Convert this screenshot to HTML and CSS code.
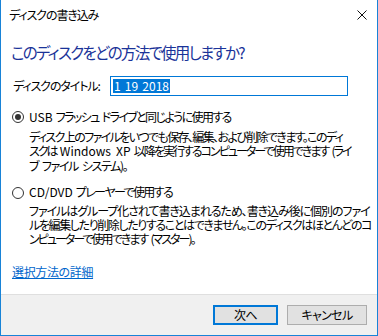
FILE: index.html
```html
<!DOCTYPE html>
<html lang="ja">
<head>
<meta charset="utf-8">
<title>ディスクの書き込み</title>
<link rel="stylesheet" href="styles.css">
</head>
<body>
<div class="window">
  <div class="titlebar">
    <span class="title">ディスクの書き込み</span>
    <svg class="close" width="10" height="10" viewBox="0 0 10 10"><path d="M0.5 0.5 L9.5 9.5 M9.5 0.5 L0.5 9.5" stroke="#111" stroke-width="1"/></svg>
  </div>
  <div class="content">
    <h1 class="instruction">このディスクをどの方法で使用しますか?</h1>
    <div class="field">
      <span class="label">ディスクのタイトル:</span>
      <div class="input"><span class="sel">1 19 2018</span></div>
    </div>
    <div class="option first">
      <span class="radio checked"></span>
      <div class="opt-body">
        <div class="opt-title"><span class="lat">USB</span> フラッシュ ドライブと同じように使用する</div>
        <p class="desc">
          <span class="ln t1">ディスク上のファイルをいつでも保存、編集、および削除できます。このディ</span>
          <span class="ln t3">スクは <span class="lat">Windows XP</span> 以降を実行するコンピューターで使用できます (ライ</span>
          <span class="ln">ブ ファイル システム)。</span>
        </p>
      </div>
    </div>
    <div class="option second">
      <span class="radio"></span>
      <div class="opt-body">
        <div class="opt-title"><span class="lat">CD/DVD</span> プレーヤーで使用する</div>
        <p class="desc">
          <span class="ln t0">ファイルはグループ化されて書き込まれるため、書き込み後に個別のファイ</span>
          <span class="ln">ルを編集したり削除したりすることはできません。このディスクはほとんどのコ</span>
          <span class="ln t3">ンピューターで使用できます (マスター)。</span>
        </p>
      </div>
    </div>
    <a class="link" href="#">選択方法の詳細</a>
  </div>
  <div class="footer">
    <button class="btn default">次へ</button>
    <button class="btn">キャンセル</button>
  </div>
</div>
</body>
</html>
```
FILE: styles.css
```css
* { box-sizing: border-box; }
html, body { margin: 0; padding: 0; background: #fff; }
body {
  font-family: "Noto Sans CJK JP", sans-serif;
  font-feature-settings: "palt";
  font-size: 12px;
  letter-spacing: -0.09em;
  word-spacing: 1.5px;
  color: #000;
}
.lat { letter-spacing: 0; }
.window {
  width: 378px;
  height: 336px;
  border-left: 1px solid #1883d7;
  border-right: 1px solid #1883d7;
  border-bottom: 1px solid #1883d7;
  display: flex;
  flex-direction: column;
  background: #fff;
}
.titlebar {
  height: 30px;
  display: flex;
  align-items: center;
  justify-content: space-between;
  padding: 0 10px 0 8px;
}
.title { font-size: 12px; line-height: 14px; }
.close { display: block; }
.content {
  flex: 1;
  padding: 0 10px 0 10px;
}
.instruction {
  margin: 12px 0 0 0;
  font-size: 15.5px;
  font-weight: normal;
  line-height: 20px;
  letter-spacing: -0.11em;
  color: #1a3399;
}
.field {
  margin-top: 14px;
  display: flex;
  align-items: center;
  height: 20px;
}
.label { width: 99px; padding-left: 2px; line-height: 14px; white-space: nowrap; }
.input {
  width: 238px;
  height: 20px;
  border: 1px solid #0078d7;
  padding: 2px 2px;
  display: flex;
  align-items: center;
}
.sel {
  background: #0078d7;
  color: #fff;
  line-height: 14px;
  padding: 0 1px;
  letter-spacing: 0;
}
.option { display: flex; align-items: flex-start; }
.option.first { margin-top: 14px; }
.option.second { margin-top: 12px; }
.radio {
  width: 12px;
  height: 12px;
  border: 1px solid #333;
  border-radius: 50%;
  margin: 1px 5px 0 1px;
  flex: none;
  display: flex;
  align-items: center;
  justify-content: center;
}
.option.second .radio { margin-top: 2px; }
.radio.checked::after {
  content: "";
  width: 6px;
  height: 6px;
  border-radius: 50%;
  background: #333;
}
.opt-title {
  font-size: 12px;
  line-height: 14px;
  white-space: nowrap;
  letter-spacing: -0.135em;
  word-spacing: 2px;
}
.desc {
  margin: 6px 0 0 0;
  line-height: 14.3px;
  white-space: nowrap;
  letter-spacing: -0.115em;
  word-spacing: 2.5px;
}
.ln { display: block; }
.ln.t0 { letter-spacing: -0.088em; }
.ln.t1 { letter-spacing: -0.135em; }
.ln.t3 { letter-spacing: -0.165em; }
.option.second .desc { margin-top: 5px; }
.link {
  display: inline-block;
  margin-top: 18px;
  padding-left: 1px;
  color: #0066cc;
  text-decoration: underline;
  line-height: 14px;
  letter-spacing: -0.03em;
}
.footer {
  height: 41px;
  border-top: 1px solid #dfdfdf;
  background: #f0f0f0;
  display: flex;
  justify-content: flex-end;
  align-items: flex-start;
  gap: 9px;
  padding: 10px 10px 0 0;
}
.btn {
  font-family: inherit;
  font-feature-settings: "palt";
  font-size: 12px;
  letter-spacing: -0.05em;
  height: 20px;
  width: 80px;
  background: #e1e1e1;
  border: 1px solid #adadad;
  color: #000;
  padding: 0;
  line-height: 14px;
}
.btn.default { width: 65px; border: 2px solid #0078d7; }
```
